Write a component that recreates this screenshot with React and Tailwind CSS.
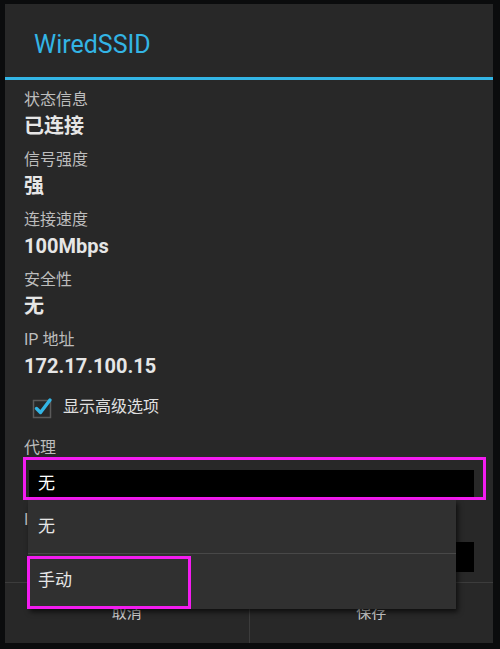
const FONT = { fontFamily: 'Roboto, "Noto Sans CJK SC", "Noto Sans", sans-serif' };

const InfoRow = ({ label, value }) => (
    <div className="flex flex-col mb-[11px]">
        <div className="text-[16px] leading-[20px] text-[#bdbdbd] mb-[3px]">{label}</div>
        <div className="text-[20px] leading-[26px] font-bold text-[#e6e6e6]">{value}</div>
    </div>
);

const CheckBox = () => (
    <svg width="24" height="24" viewBox="0 0 24 24" className="shrink-0">
        <rect x="3.5" y="5.5" width="17" height="17" fill="none" stroke="#5a5a5a" strokeWidth="1.5" />
        <path d="M6.5 13.5 L10.5 17.5 L20 5" fill="none" stroke="#33b5e5" strokeWidth="3.4" strokeLinecap="round" strokeLinejoin="round" />
    </svg>
);

export default function App() {
    return (
        <div className="w-[500px] h-[649px] bg-[#0b0c0d] pt-[4px] pl-[5px] overflow-hidden" style={FONT}>
            <div className="relative w-[488px] h-[639px] bg-[#282828] flex flex-col">
                <div className="h-[73px] flex items-center pl-[29px] pt-[8px]">
                    <span className="text-[25px] text-[#33b5e5]">WiredSSID</span>
                </div>
                <div className="h-[3px] bg-[#33b5e5]" />

                <div className="flex-1 flex flex-col pl-[19px] pt-[10px]">
                    <InfoRow label="状态信息" value="已连接" />
                    <InfoRow label="信号强度" value="强" />
                    <InfoRow label="连接速度" value="100Mbps" />
                    <InfoRow label="安全性" value="无" />
                    <InfoRow label="IP 地址" value="172.17.100.15" />
                    <div className="flex items-center gap-[9px] h-[30px] mt-[2px] pl-[6px]">
                        <CheckBox />
                        <span className="text-[16px] text-[#e0e0e0]">显示高级选项</span>
                    </div>
                    <div className="text-[16px] leading-[20px] text-[#bdbdbd] mt-[16px]">代理</div>
                    <div className="ml-[5px] mt-[12px] w-[445px] h-[27px] bg-black flex items-center pl-[9px]">
                        <span className="text-[17px] text-white">无</span>
                    </div>
                    <div className="text-[16px] leading-[20px] text-[#bdbdbd] mt-[13px]">IP 设置</div>
                    <div className="ml-[5px] mt-[12px] w-[445px] h-[30px] bg-black" />
                </div>

                <div className="h-[61px] flex border-t border-[#3c3c3c]">
                    <div className="flex-1 flex items-center justify-center text-[15px] text-[#cfcfcf]">取消</div>
                    <div className="w-px bg-[#3c3c3c]" />
                    <div className="flex-1 flex items-center justify-center text-[15px] text-[#cfcfcf]">保存</div>
                </div>

                <div className="absolute left-[18px] top-[453px] w-[463px] h-[43px] border-[3px] border-[#f31cf0]" />

                <div className="absolute left-[23px] top-[496px] w-[428px] h-[109px] bg-[#303030] flex flex-col shadow-[2px_3px_5px_rgba(0,0,0,0.65)]">
                    <div className="h-[54px] flex items-center pl-[10px] border-b border-[#484848]">
                        <span className="text-[17px] text-[#e6e6e6]">无</span>
                    </div>
                    <div className="h-[54px] flex items-center pl-[10px]">
                        <span className="text-[17px] text-[#e6e6e6]">手动</span>
                    </div>
                </div>

                <div className="absolute left-[22px] top-[552px] w-[164px] h-[53px] border-[3px] border-[#f31cf0]" />
            </div>
        </div>
    );
}
